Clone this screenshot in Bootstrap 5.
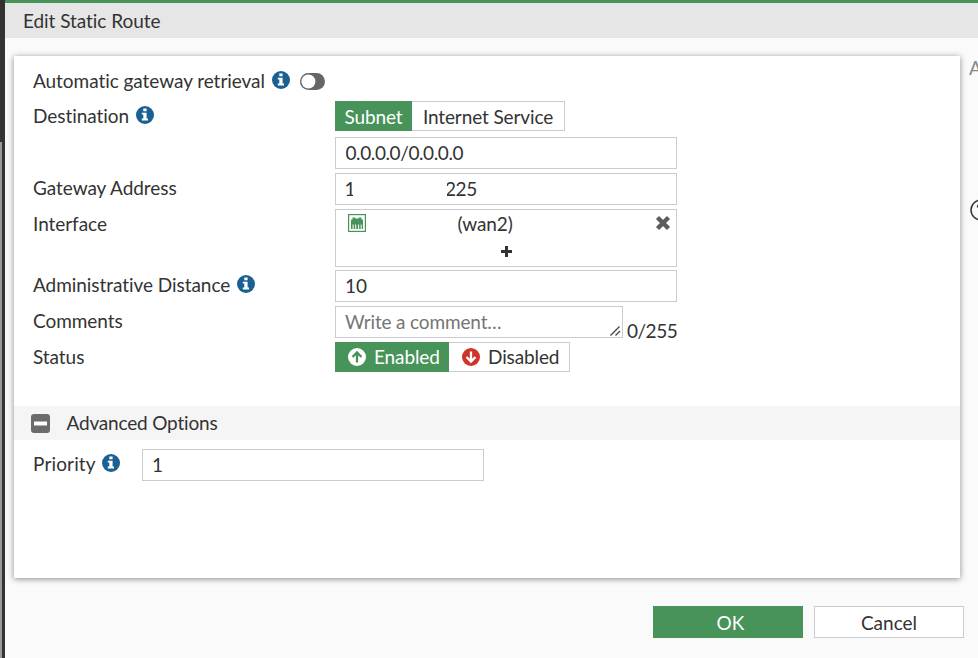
<!DOCTYPE html>
<html lang="en">
<head>
<meta charset="utf-8">
<title>Edit Static Route</title>
<link href="https://cdn.jsdelivr.net/npm/bootstrap@5.3.0/dist/css/bootstrap.min.css" rel="stylesheet">
<style>
body{font-family:Lato,sans-serif;font-size:19px;line-height:30px;font-variant-ligatures:none;letter-spacing:-.05px;color:#333;background:#fafafa;height:658px;overflow:hidden}
.rail{width:5px;background:#333}
.rail-line{width:2px;height:516px;background:#999}
.pane{min-width:0;border-top:3px solid #47935a}
.title-bar{height:35px;line-height:35px;padding-left:18px;background:#e6e6e6}
.main-area{padding:18px 0 0 9px}
.sheet{width:946px;height:522px;background:#fff;box-shadow:0 1px 6px rgba(0,0,0,.45);padding-top:10px}
.line{padding-left:19px;margin-bottom:4px}
.caption{width:302px;height:30px}
.field{width:342px;height:32px;border:1px solid #ccc;border-radius:0;padding:0 9px;font-size:19px;line-height:30px;color:#333;background:#fff}
input.field{padding-bottom:2px;letter-spacing:-.1px}
.field.tight{letter-spacing:-.4px;padding-left:9.5px}
.field::placeholder{color:#757575;opacity:1}
.info{width:18px;height:18px;margin-left:6.7px;margin-top:5.3px}
.opt{height:30px;line-height:28px;border:1px solid #ccc;border-radius:0;font-size:19px;letter-spacing:-.12px;color:#333;background:#fff}
.opt span{line-height:28px;margin-top:-1px}
.opt.on{background:#47935a;border-color:#47935a;color:#fff}
.opt svg{width:18px;height:18px;margin-right:8px}
.w-sub{width:77px;padding:1px 0 0}
.w-net{width:153px;padding:1px 0 0}
.w-ena{width:114px;padding:0 0 0 12px}
.w-dis{width:121px;padding:0 0 0 13px}
.picker{height:58px}
.section-head{height:34px;line-height:34px;background:#f5f5f5;margin-top:34px;padding-left:17px;letter-spacing:-.18px}
.cut{overflow:hidden;white-space:nowrap}
.cut-first{width:8px}
.cut-first span{margin-left:-.5px}
.cut-last{width:32px;margin-left:94px;letter-spacing:-.4px}
.cut-last span{margin-left:-2px}
.memo{width:288px;height:32px;resize:none;overflow:hidden;letter-spacing:-.15px}
.grip{right:2px;bottom:2px;width:11px;height:10px}
.action{width:150px;height:32px;line-height:30px;padding:1px 0 0;border-radius:0;font-size:19px;border:1px solid #ccc;background:#fff;color:#333}
.action.primary{background:#47935a;border-color:#47935a;color:#fff;padding-left:5px}
.side{width:9px;margin:-3px 0 0 9px;overflow:hidden;color:#888}
.side svg{margin-top:116px;margin-left:1px;width:22px;height:22px}
</style>
</head>
<body class="d-flex">
<svg class="d-none">
<symbol id="info" viewBox="0 0 18 18"><circle cx="9" cy="9" r="9" fill="#1b6093"/><path fill="#fff" d="M7.3 2.5h3.3v2.8H7.3zM5.8 6.7h4.8v5.7H12v2H5.8v-2h1.5V8.6H5.8z"/></symbol>
</svg>
<aside class="rail d-flex flex-column justify-content-end flex-shrink-0"><div class="rail-line"></div></aside>
<div class="pane flex-grow-1">
<header class="title-bar">Edit Static Route</header>
<main class="main-area">
<div class="d-flex">
<section class="sheet flex-shrink-0">
<div class="line d-flex mb-0" style="height:35px"><span>Automatic gateway retrieval</span><svg class="info"><use href="#info"/></svg>
<svg width="25" height="17" viewBox="0 0 25 17" style="margin:7px 0 0 10.3px"><rect width="25" height="17" rx="8.5" fill="#666"/><circle cx="8.4" cy="8.5" r="7" fill="#fff"/></svg></div>
<div class="line d-flex" style="margin-bottom:6px"><div class="caption d-flex">Destination<svg class="info"><use href="#info"/></svg></div><div class="d-flex"><button class="opt on w-sub">Subnet</button><button class="opt border-start-0 w-net">Internet Service</button></div></div>
<div class="line d-flex"><div class="caption"></div><input class="field tight" value="0.0.0.0/0.0.0.0" aria-label="Destination"></div>
<div class="line d-flex"><div class="caption">Gateway Address</div><div class="field d-flex"><div class="cut cut-first"><span>1</span></div><div class="cut cut-last"><span>225</span></div></div></div>
<div class="line d-flex" style="margin-bottom:3px"><div class="caption">Interface</div>
<div class="field picker"><div class="d-flex" style="height:30px;padding-left:3px"><svg width="18" height="18" viewBox="0 0 18 18" style="margin-top:4px"><rect x=".6" y=".6" width="16.8" height="16.8" fill="#fff" stroke="#47935a" stroke-width="1.2"/><path fill="#47935a" d="M3 15V5.5h1.5V3.5h2.8v1h3.4v-1h2.8v2H15V15h-1.3v-4.5h-1V15h-1.6v-4.5h-1V15H8.2v-4.5h-1V15H5.6v-4.5h-1V15z"/></svg><span style="margin:-1px 0 0 91.5px">(wan2)</span><svg class="ms-auto" width="16" height="16" viewBox="0 0 16 16" style="margin:5px -4px 0 0"><path d="M2.5 2.5l11 11M13.5 2.5l-11 11" stroke="#5c5c5c" stroke-width="4.4"/></svg></div>
<svg class="d-block mx-auto" width="11" height="11" viewBox="0 0 11 11" style="margin-top:6px"><path d="M5.5 0v11M0 5.5h11" stroke="#333" stroke-width="3"/></svg></div></div>
<div class="line d-flex"><div class="caption d-flex">Administrative Distance<svg class="info"><use href="#info"/></svg></div><input class="field" value="10" aria-label="Administrative Distance"></div>
<div class="line d-flex"><div class="caption">Comments</div><div class="position-relative d-flex"><textarea class="field memo" rows="1" placeholder="Write a comment…"></textarea><svg class="grip position-absolute" viewBox="0 0 11 10"><path d="M.5 9.5l9-9M5.5 9.5l4.5-4.5" fill="none" stroke="#444" stroke-width="1.3"/></svg></div><span style="margin:10px 0 -8px 4px;letter-spacing:-.5px">0/255</span></div>
<div class="line d-flex mb-0"><div class="caption">Status</div><div class="d-flex"><button class="opt on w-ena d-flex align-items-center"><svg viewBox="0 0 18 18"><circle cx="9" cy="9" r="9" fill="#fff"/><path d="M9 14.5V4.5M4.5 9L9 4.5 13.5 9" fill="none" stroke="#47935a" stroke-width="2.3"/></svg><span>Enabled</span></button><button class="opt border-start-0 w-dis d-flex align-items-center"><svg viewBox="0 0 18 18"><circle cx="9" cy="9" r="9" fill="#cf3429"/><path d="M9 3.5v10M4.5 9L9 13.5 13.5 9" fill="none" stroke="#fff" stroke-width="2.3"/></svg><span>Disabled</span></button></div></div>
<div class="section-head d-flex align-items-center"><svg width="19" height="19" viewBox="0 0 19 19" style="margin-right:16.5px"><rect width="19" height="19" rx="3" fill="#6b6b6b"/><path d="M3 9.5h13" stroke="#fff" stroke-width="4"/></svg>Advanced Options</div>
<div class="line d-flex" style="margin-top:9px"><div class="d-flex" style="width:109px;letter-spacing:.15px">Priority<svg class="info"><use href="#info"/></svg></div><input class="field" value="1" aria-label="Priority"></div>
</section>
<aside class="side">A<svg viewBox="0 0 22 22" fill="none"><circle cx="11" cy="11" r="10" stroke="#333" stroke-width="1.5"/><path d="M7.5 8.5c0-5 7-4 7-.5 0 2.5-3.5 2.5-3.5 5" stroke="#333" stroke-width="1.5"/></svg></aside>
</div>
<footer class="d-flex justify-content-end" style="gap:11px;padding:28px 14px 0 0"><button class="action primary">OK</button><button class="action">Cancel</button></footer>
</main>
</div>
<script src="https://cdn.jsdelivr.net/npm/bootstrap@5.3.0/dist/js/bootstrap.bundle.min.js"></script>
</body>
</html>
